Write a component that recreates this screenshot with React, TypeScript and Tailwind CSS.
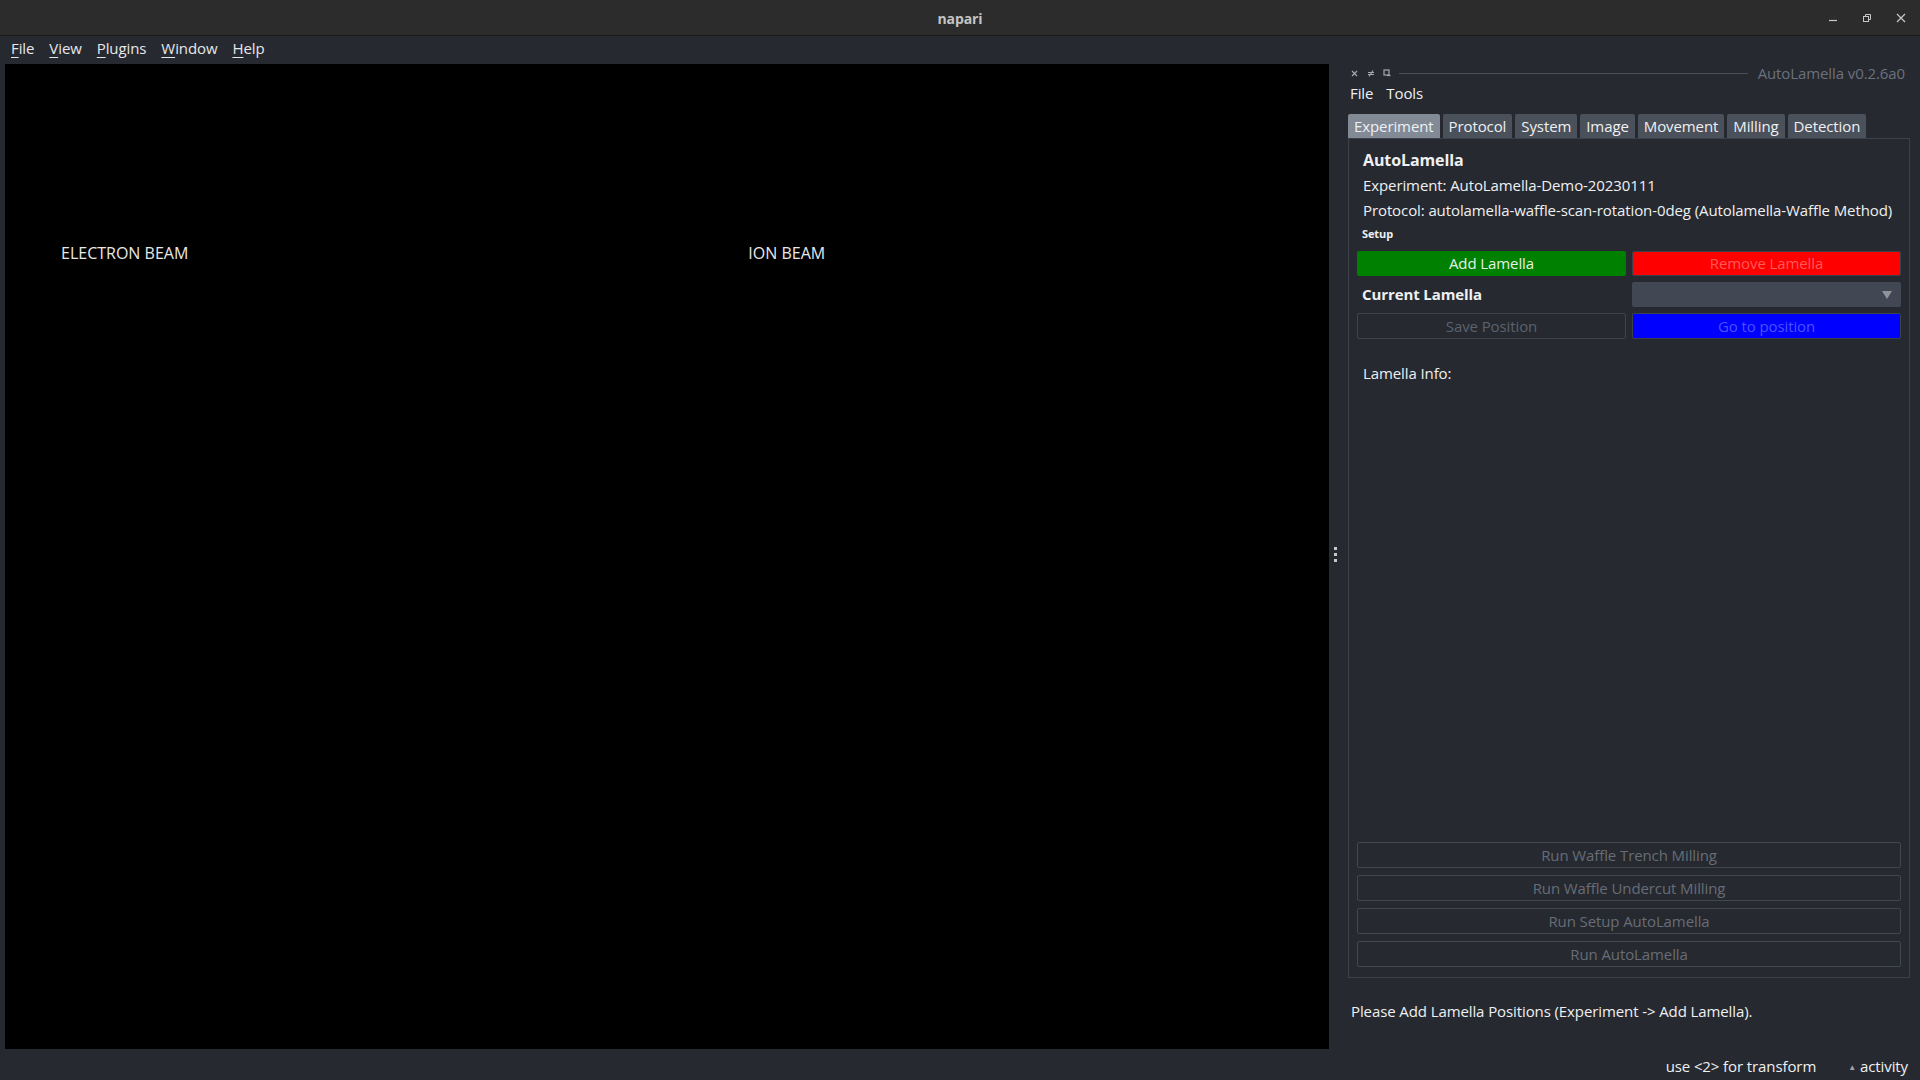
const font = { fontFamily: '"Open Sans", "Noto Sans", sans-serif', letterSpacing: "-0.1px" };

function MenuItem({ label }: { label: string }) {
  return (
    <span className="text-[15px] text-[#e6e7e9]">
      <span className="underline underline-offset-[3px]">{label[0]}</span>
      {label.slice(1)}
    </span>
  );
}

const tabs = ["Experiment", "Protocol", "System", "Image", "Movement", "Milling", "Detection"];
const runButtons = [
  "Run Waffle Trench Milling",
  "Run Waffle Undercut Milling",
  "Run Setup AutoLamella",
  "Run AutoLamella",
];

export default function App() {
  return (
    <div className="w-[1920px] h-[1080px] bg-[#262930] flex flex-col overflow-hidden" style={font}>
      {/* Window title bar */}
      <div className="h-[36px] bg-[#2c2c2c] border-b border-[#1b1b1b] flex items-center relative shrink-0">
        <div className="flex-1 text-center text-[14px] font-bold text-[#c4c4c4] pt-[2px]">napari</div>
        <div className="absolute right-0 top-0 h-full flex items-center gap-[20px] pr-[12px] text-[#c8c8c8]">
          <svg width="14" height="14" viewBox="0 0 14 14"><path d="M3 9.5h8" stroke="currentColor" strokeWidth="1.2" /></svg>
          <svg width="14" height="14" viewBox="0 0 14 14" fill="none" stroke="currentColor" strokeWidth="1">
            <rect x="3.5" y="5.5" width="5" height="5" />
            <path d="M5.5 5.5v-2h5v5h-2" />
          </svg>
          <svg width="14" height="14" viewBox="0 0 14 14" stroke="currentColor" strokeWidth="1.2"><path d="M3 3l8 8M11 3l-8 8" /></svg>
        </div>
      </div>

      {/* Main menu bar */}
      <div className="h-[28px] flex items-center gap-[15px] pl-[11px] pb-[4px] shrink-0">
        {["File", "View", "Plugins", "Window", "Help"].map((m) => (
          <MenuItem key={m} label={m} />
        ))}
      </div>

      {/* Main body */}
      <div className="flex flex-1 min-h-0">
        <div className="flex flex-col w-[1329px] shrink-0">
          <div className="ml-[5px] h-[985px] bg-black">
            <div className="flex pt-[177px] text-[16px] text-[#e8e8e8]" style={{ letterSpacing: "0px" }}>
              <span className="ml-[56px]">ELECTRON BEAM</span>
              <span className="ml-[560px]">ION BEAM</span>
            </div>
          </div>
        </div>

        {/* Splitter handle */}
        <div className="w-[12px] flex flex-col items-center justify-center gap-[3px] pb-[4px] shrink-0">
          <div className="w-[3px] h-[3px] bg-[#c8c8c8]" />
          <div className="w-[3px] h-[3px] bg-[#c8c8c8]" />
          <div className="w-[3px] h-[3px] bg-[#c8c8c8]" />
        </div>

        {/* Dock widget */}
        <div className="flex-1 flex flex-col pl-[7px] pr-[10px]">
          <div className="h-[16px] mt-[1px] flex items-center text-[#a4a9b1]">
            <svg className="ml-[3px]" width="7" height="7" viewBox="0 0 7 7" stroke="currentColor" strokeWidth="1.2"><path d="M1 1l5 5M6 1l-5 5" /></svg>
            <svg className="ml-[9px]" width="8" height="7" viewBox="0 0 8 7" fill="none" stroke="currentColor" strokeWidth="1.1"><path d="M1 2.5h6M1 4.5h6M2 6.5l4-6" /></svg>
            <svg className="ml-[8px]" width="8" height="8" viewBox="0 0 8 8" fill="none" stroke="currentColor" strokeWidth="1.2"><rect x="1" y="1" width="5" height="5" /><path d="M4 6.5h3.5" /></svg>
            <div className="flex-1 h-px bg-[#4a4f58] ml-[8px] mr-[10px]" />
            <span className="text-[15px] text-[#6b717c] pr-[5px]">AutoLamella v0.2.6a0</span>
          </div>
          <div className="h-[24px] flex items-center gap-[13px] pl-[2px] text-[15px] text-[#eef0f2]">
            <span>File</span>
            <span>Tools</span>
          </div>

          {/* Tabs */}
          <div className="flex gap-[3px] mt-[9px] h-[24px]">
            {tabs.map((t, i) => (
              <div
                key={t}
                className={
                  i === 0
                    ? "px-[6px] flex items-center rounded-t-[2px] bg-[#828a96] text-[15px] text-[#eef0f2]"
                    : "px-[6px] flex items-center rounded-t-[2px] bg-[#4b515b] text-[15px] text-[#eef0f2]"
                }
              >
                {t}
              </div>
            ))}
          </div>

          {/* Tab pane */}
          <div className="h-[840px] border border-[#3b4049] flex flex-col px-[8px] pt-[8px] pb-[10px]">
            <div className="pl-[6px] text-[16px] font-bold text-[#eef0f2] h-[26px] flex items-center">AutoLamella</div>
            <div className="pl-[6px] text-[15px] text-[#eef0f2] h-[25px] flex items-center">Experiment: AutoLamella-Demo-20230111</div>
            <div className="pl-[6px] text-[15px] text-[#eef0f2] h-[25px] flex items-center">Protocol: autolamella-waffle-scan-rotation-0deg (Autolamella-Waffle Method)</div>
            <div className="pl-[5px] text-[11px] font-bold text-[#eef0f2] h-[22px] flex items-center">Setup</div>

            <div className="grid grid-cols-2 gap-x-[6px] gap-y-[6px] mt-[6px]">
              <div className="h-[25px] bg-[#008000] rounded-[2px] flex items-center justify-center text-[15px] text-[#e6f0e6]">Add Lamella</div>
              <div className="h-[25px] bg-[#ff0000] rounded-[2px] border border-[#3b4049] flex items-center justify-center text-[15px] text-[#ff5a5a]">Remove Lamella</div>
              <div className="h-[25px] flex items-center pl-[5px] text-[15px] font-bold text-[#eef0f2]">Current Lamella</div>
              <div className="h-[25px] bg-[#414853] rounded-[2px] flex items-center justify-end pr-[8px]">
                <svg width="12" height="10" viewBox="0 0 12 10"><path d="M1 1h10L6 9z" fill="#8e949c" /></svg>
              </div>
              <div className="h-[26px] border border-[#3f444d] rounded-[2px] flex items-center justify-center text-[15px] text-[#5c626b]">Save Position</div>
              <div className="h-[26px] bg-[#0000ff] border border-[#3b4049] rounded-[2px] flex items-center justify-center text-[15px] text-[#4a52ff]">Go to position</div>
            </div>

            <div className="pl-[6px] mt-[23px] text-[15px] text-[#eef0f2]">Lamella Info:</div>

            <div className="flex-1" />

            <div className="flex flex-col gap-[7px]">
              {runButtons.map((b) => (
                <div key={b} className="h-[26px] border border-[#41464f] rounded-[2px] flex items-center justify-center text-[15px] text-[#676d76]">
                  {b}
                </div>
              ))}
            </div>
          </div>

          <div className="mt-[22px] pl-[3px] text-[15px] text-[#eef0f2]">Please Add Lamella Positions (Experiment -&gt; Add Lamella).</div>
        </div>
      </div>

      {/* Status bar */}
      <div className="h-[31px] shrink-0 flex items-center justify-end pr-[12px] pt-[4px] text-[15px] text-[#eef0f2]">
        <span>use &lt;2&gt; for transform</span>
        <span className="ml-[32px] flex items-center gap-[4px]">
          <span className="text-[8px] text-[#a0a5ad]">▲</span>
          activity
        </span>
      </div>
    </div>
  );
}
